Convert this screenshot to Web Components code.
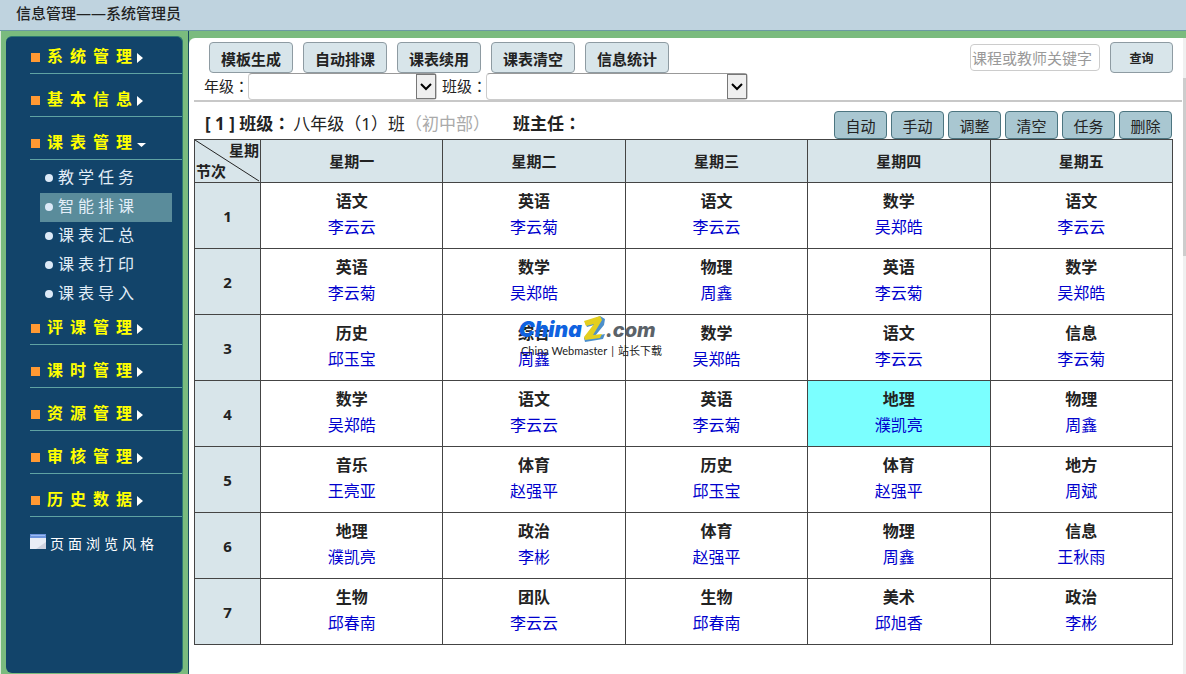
<!DOCTYPE html>
<html lang="zh-CN">
<head>
<meta charset="utf-8">
<title>信息管理——系统管理员</title>
<style>
  body { margin: 0; font-family: "Noto Sans", "Noto Sans CJK SC", sans-serif; font-size: 16px; color: #222; }
</style>
</head>
<body>
<app-shell></app-shell>
<script>
class Base extends HTMLElement {
  constructor() {
    super();
    this.attachShadow({ mode: 'open' });
  }
  connectedCallback() { this.shadowRoot.innerHTML = this.render(); }
}

customElements.define('app-shell', class extends Base {
  render() {
    return `<style>
      :host { display: grid; grid-template-rows: auto 1fr; height: 100vh; background: #7abb7e; overflow: hidden; }
      header { background: #bfd3df; border-bottom: 1px solid #6b9aa3; padding: 0 16px; font-size: 15px; font-weight: 500; line-height: 26px; box-sizing: border-box; height: 31px; }
      .body { display: grid; grid-template-columns: 189px 1fr; min-height: 0; }
    </style>
    <header>信息管理——系统管理员</header>
    <div class="body">
      <side-menu></side-menu>
      <main-panel></main-panel>
    </div>`;
  }
});

customElements.define('side-menu', class extends Base {
  render() {
    const group = n => `<menu-group label="${n}"></menu-group>`;
    return `<style>
      :host { display: block; box-sizing: border-box; padding: 5px 5px 1px 5px; border-left: 1px solid #dcebdc; border-right: 1px solid #174a60; min-height: 0; }
      nav { background: #12446a; border-radius: 6px; height: 100%; box-sizing: border-box; padding: 2px 0 0 24px; border: 0 solid #2d7a72; border-top-width: 1px; border-right-width: 1px; }
      a { display: flex; align-items: center; gap: 4px; color: #fff; font-size: 14px; letter-spacing: 4px; text-decoration: none; line-height: 24px; margin-top: 15px; }
      svg { margin-bottom: 6px; flex: none; }
    </style>
    <nav>
      ${group('系统管理')}${group('基本信息')}
      <menu-group label="课表管理" open>
        <menu-item>教学任务</menu-item>
        <menu-item current>智能排课</menu-item>
        <menu-item>课表汇总</menu-item>
        <menu-item>课表打印</menu-item>
        <menu-item>课表导入</menu-item>
      </menu-group>
      ${['评课管理', '课时管理', '资源管理', '审核管理', '历史数据'].map(group).join('')}
      <a href="#"><svg width="16" height="15"><rect width="16" height="15" fill="#e9edf5"/><rect width="16" height="4" fill="#6d94dd"/><rect y="1" x="1" width="14" height="1" fill="#9cbcf2"/><path d="M16 8v7H6z" fill="#cfd2de"/></svg>页面浏览风格</a>
    </nav>`;
  }
});

customElements.define('menu-group', class extends Base {
  render() {
    const open = this.hasAttribute('open');
    return `<style>
      :host { display: block; margin-bottom: 8px; }
      :host([open]) { margin-bottom: 1px; }
      button { display: flex; align-items: center; width: 100%; height: 35px; padding: 0 0 2px 1px; border: 0; border-bottom: 1px solid #5fa3a3; background: none; color: #ff0; font: bold 16px "Noto Sans CJK SC", sans-serif; letter-spacing: 7px; text-align: left; }
      button::before { content: ""; width: 9px; height: 9px; background: #f93; margin: 5px 7px 0 0; }
      svg { margin-top: 5px; margin-left: -2px; }
      .list { padding: 4px 0 0 10px; }
    </style>
    <button>${this.getAttribute('label')}<svg width="10" height="10" fill="#fff">${open ? '<path d="M0 4h9L4.500 8z"/>' : '<path d="M0 0l6 5-6 5z"/>'}</svg></button>
    ${open ? '<div class="list"><slot></slot></div>' : ''}`;
  }
});

customElements.define('menu-item', class extends Base {
  render() {
    return `<style>
      :host { display: block; margin-right: 10px; }
      :host([current]) { background: #5a8c9b; }
      a { display: flex; align-items: center; height: 29px; padding: 0 0 5px 5px; box-sizing: border-box; color: #e2eef8; font-size: 16px; letter-spacing: 4px; text-decoration: none; }
      a::before { content: ""; width: 8px; height: 8px; border-radius: 50%; background: #dceaf8; margin: 3px 5px 0 0; }
    </style><a href="#"><slot></slot></a>`;
  }
});

customElements.define('main-panel', class extends Base {
  render() {
    return `<style>
      :host { display: grid; grid-template-columns: 1fr 3px; margin-top: 7px; background: #fff; border-top-left-radius: 6px; min-height: 0; overflow: hidden; }
      .content { padding: 4px 10px 0 5px; min-width: 0; }
      .bar { background: #f0f0f0; }
      .bar::before { content: ""; display: block; height: 178px; margin-top: 40px; background: #cdcdcd; }
    </style>
    <div class="content">
      <tool-bar></tool-bar>
      <class-title></class-title>
      <time-table></time-table>
    </div>
    <div class="bar"></div>`;
  }
});

customElements.define('tool-bar', class extends Base {
  render() {
    const btns = ['模板生成', '自动排课', '课表续用', '课表清空', '信息统计'];
    return `<style>
      :host { display: block; border-bottom: 2px solid #c8c8c8; margin-right: -9px; padding-right: 9px; }
      .top { display: flex; gap: 10px; padding-left: 15px; height: 31px; }
      button { width: 84px; padding: 1px 0 0; border: 1px solid #8e9ba2; border-radius: 4px; background: #d8e5ea; color: #222; font: bold 15px "Noto Sans CJK SC", sans-serif; }
      .query { width: 63px; font-size: 12px; padding: 0; }
      input { margin: 2px 0 2px auto; width: 130px; box-sizing: border-box; border: 1px solid #ccc; border-radius: 4px; padding: 0 1px; font: 15px "Noto Sans CJK SC", sans-serif; }
      input::placeholder { color: #999; opacity: 1; }
      .filters { display: flex; height: 27px; padding-left: 10px; }
      label { display: flex; font-size: 15px; line-height: 26px; margin-right: 5px; }
      label span { width: 44px; white-space: nowrap; }
      i { font-style: normal; font-family: "Noto Sans CJK TC", sans-serif; }
      .pick { display: grid; width: 189px; }
      .wide { width: 262px; }
      select, .arrow { grid-area: 1 / 1; }
      select { appearance: none; background: #fff; border: 1px solid #ccc; border-top-color: #999; border-radius: 4px; }
      .arrow { justify-self: end; width: 20px; margin: 1px 1px 1px 0; box-sizing: border-box; border: 1px solid #777; background: #efefef; display: grid; place-items: center; pointer-events: none; }
    </style>
    <div class="top">${btns.map(b => `<button>${b}</button>`).join('')}
      <input type="text" placeholder="课程或教师关键字" aria-label="课程或教师关键字"><button class="query">查询</button></div>
    <div class="filters">
      ${[['年', ''], ['班', 'wide']].map(([n, c]) => `<label><span>${n}级<i lang="zh-TW">：</i></span><div class="pick ${c}"><select></select><div class="arrow"><svg width="14" height="10" fill="none" stroke="#000" stroke-width="2"><path d="M2 2l5 5 5-5"/></svg></div></div></label>`).join('')}
    </div>`;
  }
});

customElements.define('class-title', class extends Base {
  render() {
    return `<style>
      :host { display: flex; height: 37px; font-size: 17px; align-items: flex-end; }
      p { margin: 0; padding-left: 11px; line-height: 30px; white-space: pre; }
      i { font-style: normal; font-family: "Noto Sans CJK TC", sans-serif; }
      .dim { color: #aaa; }
      .name { margin-left: 3px; }
      .head { margin-left: 23px; }
      .acts { margin-left: auto; display: flex; gap: 4px; padding-right: 1px; }
      button { width: 53px; height: 28px; padding: 0; border: 1px solid #4c7580; border-radius: 4px; background: #a9c7d1; color: #222; font: 15px "Noto Sans CJK SC", sans-serif; }
    </style>
    <p><b>[ 1 ] 班级<i lang="zh-TW">：</i></b><span class="name">八年级<i lang="zh-TW">（</i>1<i lang="zh-TW">）</i>班</span><span class="dim"><i lang="zh-TW">（</i>初中部<i lang="zh-TW">）</i></span><b class="head">班主任<i lang="zh-TW">：</i></b></p>
    <div class="acts">${['自动', '手动', '调整', '清空', '任务', '删除'].map(t => `<button>${t}</button>`).join('')}</div>`;
  }
});

customElements.define('time-table', class extends Base {
  render() {
    const rows = [
      '语文 李云云|英语 李云菊|语文 李云云|数学 吴郑皓|语文 李云云',
      '英语 李云菊|数学 吴郑皓|物理 周鑫|英语 李云菊|数学 吴郑皓',
      '历史 邱玉宝|综合 周鑫|数学 吴郑皓|语文 李云云|信息 李云菊',
      '数学 吴郑皓|语文 李云云|英语 李云菊|地理 濮凯亮|物理 周鑫',
      '音乐 王亮亚|体育 赵强平|历史 邱玉宝|体育 赵强平|地方 周斌',
      '地理 濮凯亮|政治 李彬|体育 赵强平|物理 周鑫|信息 王秋雨',
      '生物 邱春南|团队 李云云|生物 邱春南|美术 邱旭香|政治 李彬'
    ];
    return `<style>
      :host { display: block; position: relative; }
      table { border-collapse: collapse; width: 100%; table-layout: fixed; }
      th, td { border: 1px solid #444; padding: 0; text-align: center; box-sizing: border-box; }
      th { background: #d8e5ea; font-size: 15px; }
      thead th { height: 43px; padding-bottom: 2px; }
      tbody th { width: 66px; }
      td { height: 66px; line-height: 26px; padding-bottom: 4px; }
      td b, td a { display: block; }
      td a { color: #0000cd; text-decoration: none; }
      .on { background: #7bffff; }
      thead .corner { width: 66px; padding: 0; line-height: 20px; }
      .split { display: grid; height: 42px; }
      .split > * { grid-area: 1 / 1; }
      .split svg { width: 100%; height: 42px; }
      .day { justify-self: end; padding-right: 1px; }
      .no { justify-self: start; align-self: end; padding: 0 0 1px 1px; }
    </style>
    <table>
      <thead><tr><th class="corner"><div class="split"><svg viewBox="0 0 66 42" preserveAspectRatio="none"><path d="M0 0L65 41" stroke="#222"/></svg><span class="day">星期</span><span class="no">节次</span></div></th>
      ${'一二三四五'.split('').map(d => `<th>星期${d}</th>`).join('')}</tr></thead>
      <tbody>${rows.map((r, i) => `<tr><th>${i + 1}</th>${r.split('|').map((c, j) => {
        const [s, t] = c.split(' ');
        return `<td${i === 3 && j === 3 ? ' class="on"' : ''}><b>${s}</b><a href="#">${t}</a></td>`;
      }).join('')}</tr>`).join('')}</tbody>
    </table>
    <site-mark></site-mark>`;
  }
});

customElements.define('site-mark', class extends Base {
  render() {
    return `<style>
      :host { position: absolute; left: 325px; top: 176px; width: 150px; pointer-events: none; white-space: nowrap; }
      .logo { display: flex; align-items: flex-end; font: italic 900 21px/26px Inter, "Liberation Sans", sans-serif; color: #0f62e0; }
      .com { color: #5b6268; font-weight: 800; font-size: 20px; }
      .sub { display: flex; align-items: center; gap: 4px; font: 11px/13px Lato, "Noto Sans CJK SC", sans-serif; color: #222; padding: 1px 0 0 2px; }
    </style>
    <div class="logo"><span>China</span><svg width="24" height="28" aria-hidden="true"><path d="M3 8L18 1l5 3-1 6L13 21l10-2-2 5-18 3-1-4 10-13-7 2z" fill="#4c8fcb"/><path d="M2 6L18 1l2 4L11 20l9-1-2 4-15 2-1-3L12 9 4 11z" fill="#e4cf20"/></svg><span class="com">.com</span></div>
    <div class="sub"><span>China Webmaster</span><span>|</span><span>站长下载</span></div>`;
  }
});
</script>
</body>
</html>
